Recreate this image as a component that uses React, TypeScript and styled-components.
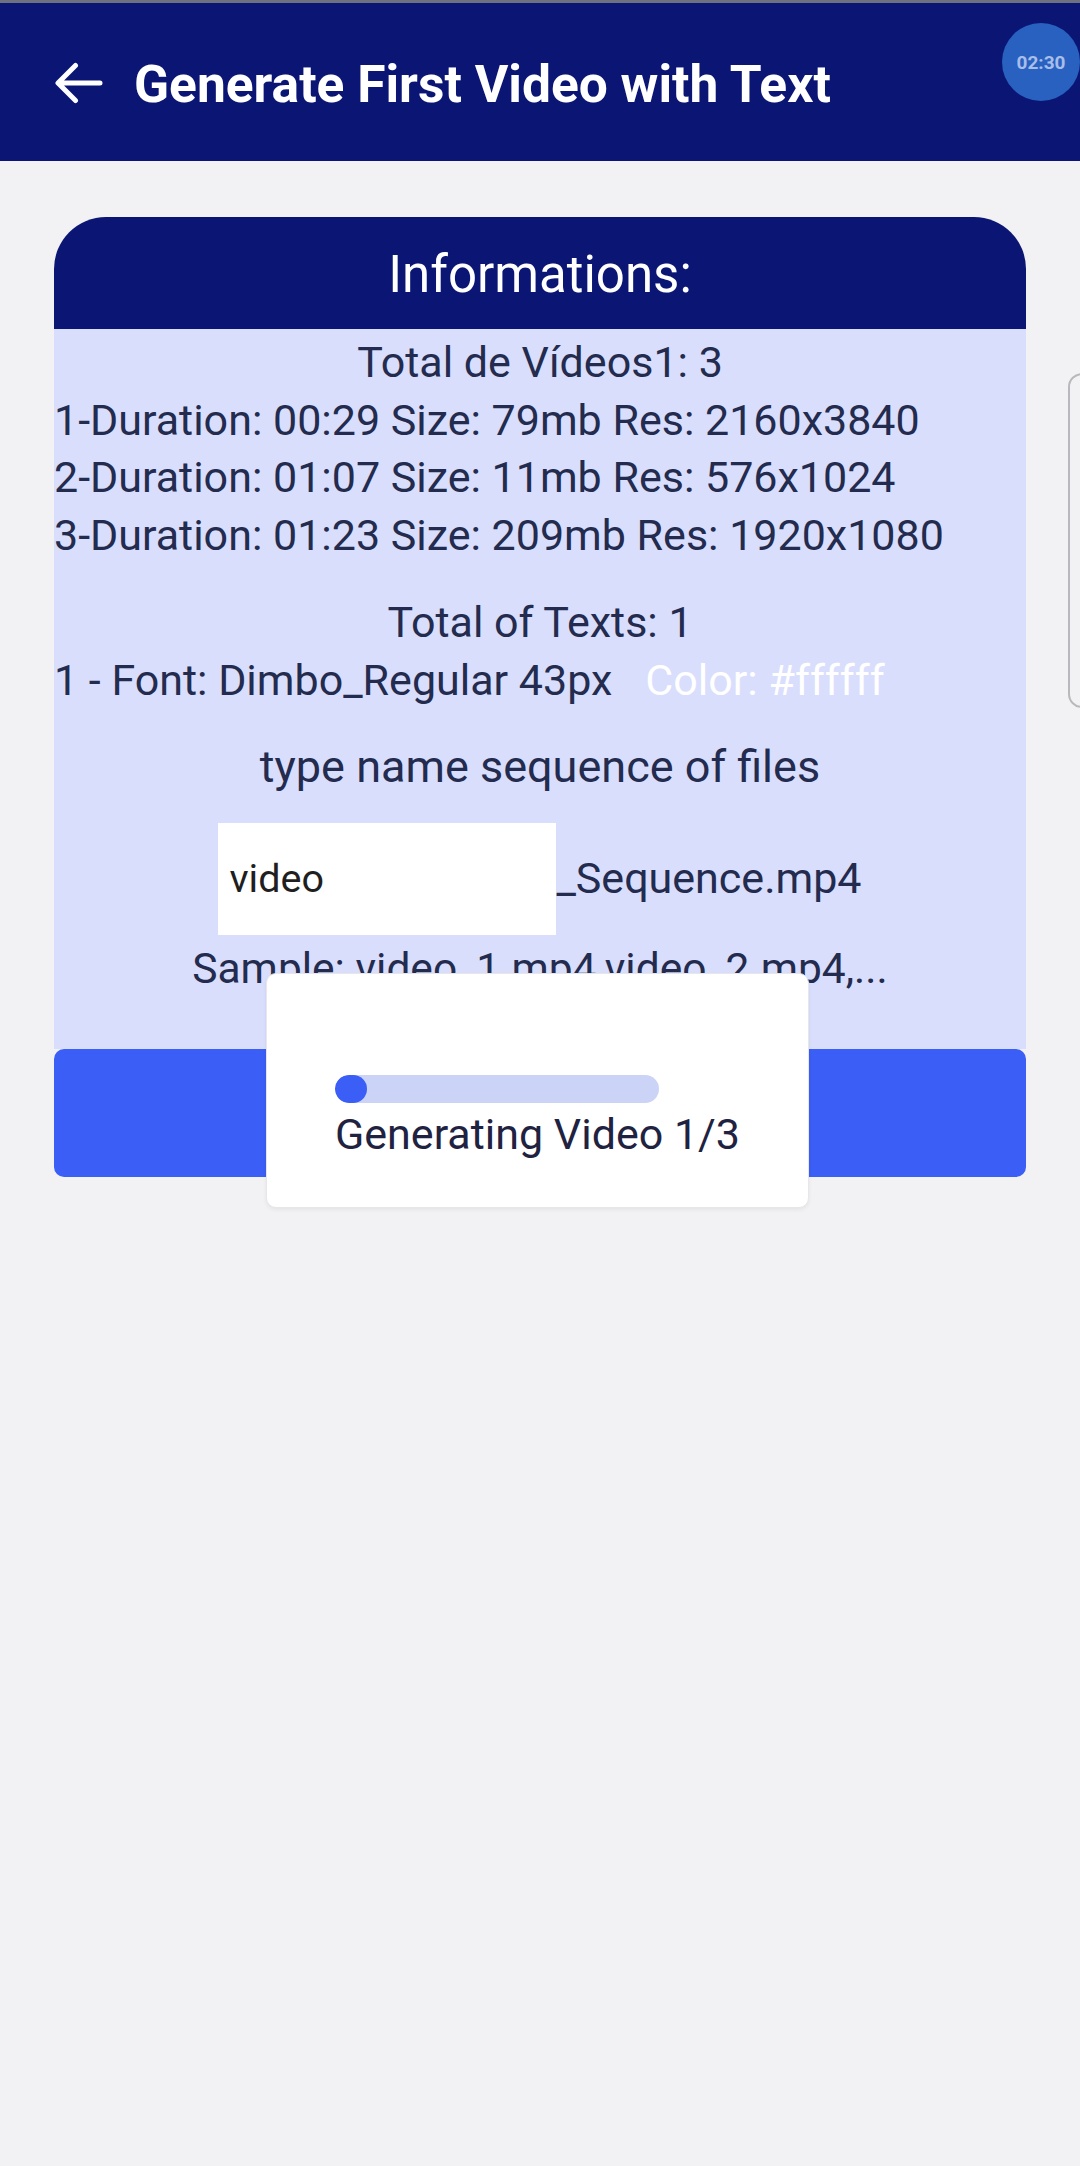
import React from "react";
import styled, { createGlobalStyle } from "styled-components";

const GlobalStyle = createGlobalStyle`
  html, body {
    margin: 0;
    padding: 0;
    background: #f2f2f4;
    font-family: Roboto, "Noto Sans", "Liberation Sans", sans-serif;
  }
  * { box-sizing: border-box; }
`;

const Page = styled.div`
  position: relative;
  width: 1080px;
  min-height: 2166px;
  overflow: hidden;
  background: #f2f2f4;
`;

const StatusStrip = styled.div`
  height: 3px;
  background: #6e717e;
`;

const AppBar = styled.header`
  height: 158px;
  background: #0b1674;
  display: flex;
  align-items: center;
  padding: 2px 0 0 55px;
  gap: 31px;
`;

const BackButton = styled.button`
  border: 0;
  padding: 0;
  background: transparent;
  width: 48px;
  height: 42px;
  display: flex;
  align-items: center;
  justify-content: center;
  cursor: pointer;
`;

const Title = styled.h1`
  margin: 0;
  padding-top: 4px;
  color: #ffffff;
  font-family: Roboto, sans-serif;
  font-weight: 700;
  font-size: 51.5px;
  line-height: 1;
`;

const TimerBubble = styled.div`
  position: absolute;
  left: 1002px;
  top: 23px;
  width: 78px;
  height: 78px;
  border-radius: 50%;
  background: #2861c0;
  color: #a9bde9;
  font-family: Roboto, sans-serif;
  font-weight: 700;
  font-size: 19px;
  display: flex;
  align-items: center;
  justify-content: center;
`;

const EdgeHandle = styled.div`
  position: absolute;
  left: 1068px;
  top: 373px;
  width: 40px;
  height: 335px;
  border: 2px solid #b9b9bd;
  border-radius: 14px;
`;

const Content = styled.main`
  padding: 56px 54px 0;
`;

const Card = styled.section`
  display: flex;
  flex-direction: column;
`;

const CardHeader = styled.div`
  height: 112px;
  background: #0b1674;
  border-radius: 52px 52px 0 0;
  color: #ffffff;
  font-size: 51px;
  display: flex;
  align-items: center;
  justify-content: center;
  padding-top: 3px;
`;

const CardBody = styled.div`
  background: #d9defc;
  padding: 5px 0 52px;
  display: flex;
  flex-direction: column;
  color: #232b4e;
  font-size: 43px;
  line-height: 57.5px;
`;

const Line = styled.div<{ $center?: boolean; $mt?: number; $size?: number }>`
  text-align: ${(p) => (p.$center ? "center" : "left")};
  margin-top: ${(p) => p.$mt ?? 0}px;
  font-size: ${(p) => p.$size ?? 43}px;
  white-space: nowrap;
`;

const FontRow = styled.div`
  display: flex;
  gap: 33px;
  white-space: nowrap;
`;

const ColorTag = styled.span`
  color: #ffffff;
`;

const NameRow = styled.div`
  margin-top: 27px;
  display: flex;
  align-items: center;
  justify-content: center;
`;

const NameInput = styled.input`
  width: 338px;
  height: 112px;
  border: 0;
  outline: none;
  background: #ffffff;
  padding: 0 0 0 11px;
  font-family: Roboto, sans-serif;
  font-size: 39.5px;
  color: #1f1f22;
`;

const Suffix = styled.span`
  white-space: nowrap;
`;

const GenerateButton = styled.button`
  height: 128px;
  border: 0;
  border-radius: 10px;
  background: #3b5ef6;
  cursor: pointer;
`;

const ProgressDialog = styled.div`
  position: absolute;
  left: 266px;
  top: 973px;
  width: 543px;
  height: 235px;
  background: #ffffff;
  border-radius: 10px;
  border: 1px solid #e7e7ea;
  box-shadow: 0 2px 4px rgba(0, 0, 0, 0.06);
  padding: 101px 0 0 68px;
  display: flex;
  flex-direction: column;
  align-items: flex-start;
`;

const Track = styled.div`
  width: 324px;
  height: 28px;
  border-radius: 14px;
  background: #cbd3f7;
  overflow: hidden;
`;

const Fill = styled.div`
  height: 100%;
  border-radius: 14px;
  background: #3b5ef6;
`;

const ProgressLabel = styled.div`
  margin-top: 6px;
  font-size: 43px;
  color: #1f2341;
  white-space: nowrap;
`;

export default function App() {
  const progress = 32 / 324;
  return (
    <Page>
      <GlobalStyle />
      <StatusStrip />
      <AppBar>
        <BackButton aria-label="Back">
          <svg width="48" height="42" viewBox="0 0 48 42" fill="none">
            <path
              d="M45 21H4M20.5 3.5L3 21l17.5 17.5"
              stroke="#ffffff"
              strokeWidth="5"
              strokeLinecap="round"
              strokeLinejoin="round"
            />
          </svg>
        </BackButton>
        <Title>Generate First Video with Text</Title>
      </AppBar>
      <Content>
        <Card>
          <CardHeader>Informations:</CardHeader>
          <CardBody>
            <Line $center>Total de Vídeos1: 3</Line>
            <Line>1-Duration: 00:29 Size: 79mb Res: 2160x3840</Line>
            <Line>2-Duration: 01:07 Size: 11mb Res: 576x1024</Line>
            <Line>3-Duration: 01:23 Size: 209mb Res: 1920x1080</Line>
            <Line $center $mt={30}>Total of Texts: 1</Line>
            <FontRow>
              <span>1 - Font: Dimbo_Regular 43px</span>
              <ColorTag>Color: #ffffff</ColorTag>
            </FontRow>
            <Line $center $mt={29} $size={45}>type name sequence of files</Line>
            <NameRow>
              <NameInput readOnly value="video" />
              <Suffix>_Sequence.mp4</Suffix>
            </NameRow>
            <Line $center $mt={5} $size={42.5}>Sample: video_1.mp4,video_2.mp4,...</Line>
          </CardBody>
          <GenerateButton aria-label="Generate" />
        </Card>
      </Content>
      <TimerBubble>02:30</TimerBubble>
      <EdgeHandle />
      <ProgressDialog>
        <Track>
          <Fill style={{ width: `${progress * 100}%` }} />
        </Track>
        <ProgressLabel>Generating Video 1/3</ProgressLabel>
      </ProgressDialog>
    </Page>
  );
}
